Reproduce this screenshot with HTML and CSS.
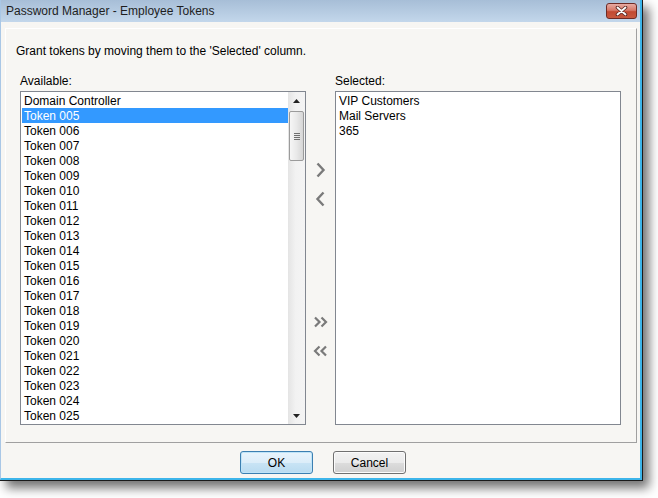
FILE: index.html
```html
<!DOCTYPE html>
<html>

<head>
    <title>Password Manager - Employee Tokens</title>
    <link rel="stylesheet" href="styles.css">
</head>

<body>
    <div class="window">
        <div class="frame">
            <div class="titlebar">
                <span class="title">Password Manager - Employee Tokens</span>
                <button class="close" type="button">
                    <svg width="15" height="10" viewBox="0 0 15 10">
                        <path d="M3.5 1.5 L11.5 8.5 M11.5 1.5 L3.5 8.5" stroke="#5a2a26" stroke-width="3.6" fill="none" stroke-linecap="round"/>
                        <path d="M3.5 1.5 L11.5 8.5 M11.5 1.5 L3.5 8.5" stroke="#ffffff" stroke-width="1.8" fill="none" stroke-linecap="round"/>
                    </svg>
                </button>
            </div>

            <div class="client">
                <div class="panel">
                    <p class="intro">Grant tokens by moving them to the 'Selected' column.</p>

                    <div class="columns">
                        <div class="col">
                            <label class="label">Available:</label>
                            <div class="list">
                                <div class="items">
                                    <div class="item">Domain Controller</div>
                                    <div class="item sel">Token 005</div>
                                    <div class="item">Token 006</div>
                                    <div class="item">Token 007</div>
                                    <div class="item">Token 008</div>
                                    <div class="item">Token 009</div>
                                    <div class="item">Token 010</div>
                                    <div class="item">Token 011</div>
                                    <div class="item">Token 012</div>
                                    <div class="item">Token 013</div>
                                    <div class="item">Token 014</div>
                                    <div class="item">Token 015</div>
                                    <div class="item">Token 016</div>
                                    <div class="item">Token 017</div>
                                    <div class="item">Token 018</div>
                                    <div class="item">Token 019</div>
                                    <div class="item">Token 020</div>
                                    <div class="item">Token 021</div>
                                    <div class="item">Token 022</div>
                                    <div class="item">Token 023</div>
                                    <div class="item">Token 024</div>
                                    <div class="item">Token 025</div>
                                </div>
                                <div class="scroll">
                                    <div class="scroll-btn">
                                        <svg width="7" height="4" viewBox="0 0 7 4"><path d="M0 4 L3.5 0 L7 4 Z" fill="#222"/></svg>
                                    </div>
                                    <div class="thumb">
                                        <span class="grip"></span>
                                    </div>
                                    <div class="track"></div>
                                    <div class="scroll-btn">
                                        <svg width="7" height="4" viewBox="0 0 7 4"><path d="M0 0 L7 0 L3.5 4 Z" fill="#222"/></svg>
                                    </div>
                                </div>
                            </div>
                        </div>

                        <div class="mover">
                            <!-- move one -->
                            <button class="move" type="button">
                                <svg width="29" height="20" viewBox="0 0 29 20"><path d="M11.5 3.5 L17.5 10 L11.5 16.5" stroke="#7a7a7a" stroke-width="2.4" fill="none"/></svg>
                            </button>
                            <button class="move" type="button">
                                <svg width="29" height="20" viewBox="0 0 29 20"><path d="M17.5 3.5 L11.5 10 L17.5 16.5" stroke="#7a7a7a" stroke-width="2.4" fill="none"/></svg>
                            </button>
                            <!-- move all -->
                            <button class="move move-all" type="button">
                                <svg width="29" height="20" viewBox="0 0 29 20"><path d="M9 5.5 L13.5 10 L9 14.5 M15.5 5.5 L20 10 L15.5 14.5" stroke="#7a7a7a" stroke-width="2.2" fill="none"/></svg>
                            </button>
                            <button class="move" type="button">
                                <svg width="29" height="20" viewBox="0 0 29 20"><path d="M13.5 5.5 L9 10 L13.5 14.5 M20 5.5 L15.5 10 L20 14.5" stroke="#7a7a7a" stroke-width="2.2" fill="none"/></svg>
                            </button>
                        </div>

                        <div class="col">
                            <label class="label">Selected:</label>
                            <div class="list">
                                <div class="items">
                                    <div class="item">VIP Customers</div>
                                    <div class="item">Mail Servers</div>
                                    <div class="item">365</div>
                                </div>
                            </div>
                        </div>
                    </div>
                </div>

                <div class="buttons">
                    <button class="btn default" type="button">OK</button>
                    <button class="btn" type="button">Cancel</button>
                </div>
            </div>
        </div>
    </div>
</body>

</html>
```

FILE: styles.css
```css
body {
    margin: 0;
    padding-bottom: 17px;
    background-color: #ffffff;
    font-family: "Liberation Sans", Arial, sans-serif;
    font-size: 12px;
    color: #000000;
}

.window {
    width: 643px;
    box-sizing: border-box;
    border-right: 1px solid #1b1b1b;
    border-bottom: 1px solid #1b1b1b;
    box-shadow: 6px 7px 10px rgba(0, 0, 0, 0.55);
}

.frame {
    border-left: 1px solid #a9c7e6;
    border-right: 2px solid #3db5ea;
    border-bottom: 2px solid #3db5ea;
}

.titlebar {
    height: 22px;
    display: flex;
    justify-content: space-between;
    align-items: center;
    padding: 0 3px 0 5px;
    background: linear-gradient(#a7bed7, #c3d7eb);
}

.title {
    font-family: "Liberation Sans", Arial, sans-serif;
    font-size: 12px;
    color: #1e1e1e;
}

.close {
    align-self: flex-start;
    margin-top: 3px;
    width: 31px;
    height: 16px;
    box-sizing: border-box;
    padding: 0;
    border: 1px solid #6e2b25;
    border-radius: 3px;
    background: linear-gradient(#e7aba3, #d67867 45%, #c24a32 55%, #c8593f);
    display: flex;
    justify-content: center;
    align-items: center;
}

.client {
    height: 456px;
    box-sizing: border-box;
    padding: 6px 3px 4px 4px;
    background-color: #f7f6f3;
}

.panel {
    height: 415px;
    box-sizing: border-box;
    padding: 15px 0 0 10px;
    border: 1px solid;
    border-color: #ffffff #a0a0a0 #a0a0a0 #ffffff;
}

.intro {
    margin: 0 0 15px;
    line-height: 15px;
}

.columns {
    display: flex;
    margin-left: 4px;
}

.col {
    width: 286px;
}

.label {
    display: block;
    line-height: 15px;
    margin-bottom: 2px;
}

.list {
    display: flex;
    height: 334px;
    box-sizing: border-box;
    border: 1px solid #828790;
    background-color: #ffffff;
}

.items {
    flex: 1;
    padding: 1px 0 0 1px;
}

.item {
    height: 15px;
    line-height: 17px;
    padding-left: 2px;
    white-space: nowrap;
}

.item.sel {
    background-color: #3399ff;
    color: #ffffff;
}

.scroll {
    width: 17px;
    display: flex;
    flex-direction: column;
    background: linear-gradient(to right, #e4e4e4, #f2f2f2 45%, #f4f4f4);
}

.scroll-btn {
    height: 17px;
    display: flex;
    justify-content: center;
    align-items: center;
}

.thumb {
    height: 50px;
    margin: 2px 1px 0;
    box-sizing: border-box;
    border: 1px solid #9b9b9b;
    border-radius: 2px;
    background: linear-gradient(to right, #f6f6f6, #e9e9e9 50%, #d6d6d6);
    display: flex;
    justify-content: center;
    align-items: center;
}

.grip {
    width: 6px;
    height: 7px;
    background: repeating-linear-gradient(#6f6f6f 0, #6f6f6f 1px, transparent 1px, transparent 2px);
}

.track {
    flex: 1;
}

.mover {
    width: 29px;
    padding-top: 86px;
    display: flex;
    flex-direction: column;
}

.move {
    width: 29px;
    height: 20px;
    padding: 0;
    margin-bottom: 9px;
    border: none;
    background: none;
}

.move-all {
    margin-top: 94px;
}

.buttons {
    display: flex;
    justify-content: center;
    gap: 20px;
    margin-top: 8px;
    padding-left: 4px;
}

.btn {
    width: 73px;
    height: 23px;
    box-sizing: border-box;
    padding: 0;
    border: 1px solid #707070;
    border-radius: 3px;
    background: linear-gradient(#f2f2f2, #ebebeb 50%, #dddddd 50%, #cfcfcf);
    box-shadow: inset 0 0 0 1px #fbfbfb;
    font-family: "Liberation Sans", Arial, sans-serif;
    font-size: 12px;
    color: #000000;
}

.btn.default {
    border-color: #3c7fb1;
    background: linear-gradient(#e8f4fc, #dcedf9 50%, #c9e4f5 50%, #b9dbf0);
    box-shadow: inset 0 0 0 1px #bfe4f8;
}
```
